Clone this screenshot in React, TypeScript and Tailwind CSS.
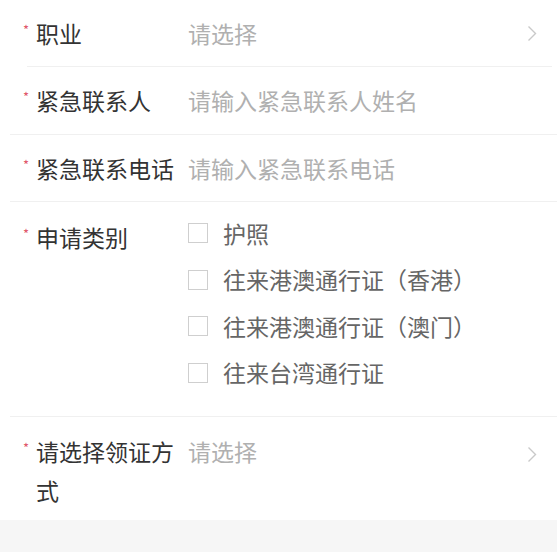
import React from "react";

const font = { fontFamily: '"Noto Sans CJK SC", "Noto Sans", sans-serif' };

function Label({ text }: { text: string }) {
  return (
    <div className="flex items-start shrink-0">
      <span className="w-[36px] shrink-0 flex justify-end pr-[7px] pt-[9px] text-[13px] leading-none text-[#e0576a]">
        *
      </span>
      <span className="w-[152px] pr-[7px] text-[#333333]">{text}</span>
    </div>
  );
}

function Chevron() {
  return (
    <svg width="10" height="17" viewBox="0 0 10 17" className="shrink-0">
      <path d="M1.5 1.5 L8.5 8.5 L1.5 15.5" fill="none" stroke="#c9c9c9" strokeWidth="1.4" />
    </svg>
  );
}

function Check({ label }: { label: string }) {
  return (
    <div className="flex items-center h-[46.5px]">
      <span className="w-[20px] h-[20px] border border-[#cfcfcf] bg-white shrink-0" />
      <span className="ml-[15px] text-[#666666]">{label}</span>
    </div>
  );
}

export default function App() {
  return (
    <div className="w-[557px] h-[552px] bg-[#f6f6f6] text-[23px] leading-[39px]" style={font}>
      <div className="bg-white">
        {/* Row 1 */}
        <div className="flex items-center h-[66px]">
          <Label text="职业" />
          <span className="text-[#b0b0b0]">请选择</span>
          <div className="ml-auto mr-[20px] flex items-center">
            <Chevron />
          </div>
        </div>
        <div className="ml-[27px] mr-[5px] h-px bg-[#f0f0f0]" />

        {/* Row 2 */}
        <div className="flex items-center h-[67px]">
          <Label text="紧急联系人" />
          <span className="text-[#b0b0b0]">请输入紧急联系人姓名</span>
        </div>
        <div className="ml-[10px] h-px bg-[#f0f0f0]" />

        {/* Row 3 */}
        <div className="flex items-center h-[66px]">
          <Label text="紧急联系电话" />
          <span className="text-[#b0b0b0]">请输入紧急联系电话</span>
        </div>
        <div className="ml-[10px] h-px bg-[#f0f0f0]" />

        {/* Row 4 */}
        <div className="flex items-start pt-[16px] pb-[20px]">
          <Label text="申请类别" />
          <div className="flex flex-col -mt-[8px]">
            <Check label="护照" />
            <Check label="往来港澳通行证（香港）" />
            <Check label="往来港澳通行证（澳门）" />
            <Check label="往来台湾通行证" />
          </div>
        </div>
        <div className="ml-[10px] h-px bg-[#f0f0f0]" />

        {/* Row 5 */}
        <div className="flex items-start pt-[15px] pb-[10px]">
          <Label text="请选择领证方式" />
          <span className="text-[#b0b0b0]">请选择</span>
          <div className="ml-auto mr-[20px] flex items-center h-[39px] pt-[6px]">
            <Chevron />
          </div>
        </div>
      </div>
    </div>
  );
}
